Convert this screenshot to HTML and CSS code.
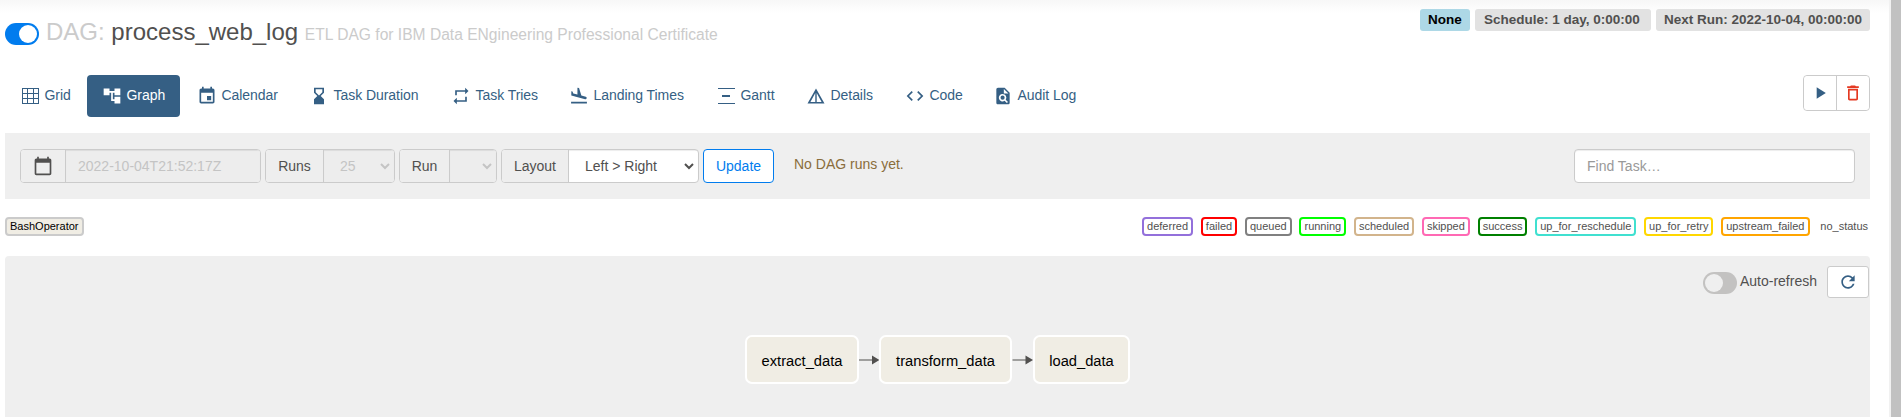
FILE: index.html
```html
<!DOCTYPE html>
<html lang="en">
<head>
<meta charset="utf-8">
<title>process_web_log - Graph</title>
<link rel="stylesheet" href="styles.css">
</head>
<body>
<main class="page">
  <header class="head">
    <h3 class="title"><span class="switch on"><i></i></span><span class="muted">DAG:</span> <span class="name">process_web_log</span> <small>ETL DAG for IBM Data ENgineering Professional Certificate</small></h3>
    <div class="badges">
      <span class="badge none">None</span>
      <span class="badge sched">Schedule: 1 day, 0:00:00</span>
      <span class="badge">Next Run: 2022-10-04, 00:00:00</span>
    </div>
  </header>

  <div class="navrow">
    <nav class="tabs">
      <a><svg viewBox="0 0 20 20"><path fill-rule="evenodd" d="M2 2h17v16H2zM3 3v4h4V3zm5 0v4h5V3zm6 0v4h4V3zM3 8v4h4V8zm5 0v4h5V8zm6 0v4h4V8zM3 13v4h4v-4zm5 0v4h5v-4zm6 0v4h4v-4z"/></svg>Grid</a>
      <a class="active"><svg viewBox="0 0 24 24"><path d="M22 11V3h-7v3H9V3H2v8h7V8h2v10h4v3h7v-8h-7v3h-2V8h2v3z"/></svg>Graph</a>
      <a><svg viewBox="0 0 24 24"><path d="M17 12h-5v5h5v-5zM16 1v2H8V1H6v2H5c-1.110 0-1.990.9-1.990 2L3 19c0 1.100.89 2 2 2h14c1.100 0 2-.9 2-2V5c0-1.100-.9-2-2-2h-1V1h-2zm3 18H5V8h14v11z"/></svg>Calendar</a>
      <a><svg viewBox="0 0 24 24"><path d="M6 2v6h.010L6 8.010 10 12l-4 4 .010.010H6V22h12v-5.990h-.010L18 16l-4-4 4-3.990-.010-.010H18V2H6zm10 5.500-4 4-4-4V4h8z"/></svg>Task Duration</a>
      <a><svg viewBox="0 0 24 24"><path d="M7 7h10v3l4-4-4-4v3H5v6h2V7zm10 10H7v-3l-4 4 4 4v-3h12v-6h-2v4z"/></svg>Task Tries</a>
      <a><svg viewBox="0 0 24 24"><path d="M2.500 19h19v2h-19zM19.340 15.850c.8.210 1.620-.26 1.840-1.060.21-.8-.26-1.620-1.060-1.840l-5.310-1.420-2.760-9.020L10.120 2v8.280L5.150 8.950l-.93-2.320-1.450-.39v5.170z"/></svg>Landing Times</a>
      <a><svg viewBox="0 0 20 20"><path d="M2 2h17v1H2zM6 9h8v2H6zM2 17h17v1H2z"/></svg>Gantt</a>
      <a><svg viewBox="0 0 20 20"><path fill-rule="evenodd" d="M10 2.500 18.500 17.500h-17zM9.300 7 4.400 16h4.900zm1.400 0v9h4.900z"/></svg>Details</a>
      <a><svg viewBox="0 0 24 24"><path d="M9.400 16.600 4.800 12l4.600-4.600L8 6l-6 6 6 6zm5.200 0 4.600-4.600-4.600-4.600L16 6l6 6-6 6z"/></svg>Code</a>
      <a><svg viewBox="0 0 24 24"><path fill-rule="evenodd" d="M14 2H6c-1.100 0-2 .9-2 2v16c0 1.100.9 2 2 2h12c1.100 0 2-.9 2-2V8zm-1 7V3.500L18.500 9zM11.500 9.500a4.500 4.500 0 1 0 2.400 8.300l2.700 2.700 1.400-1.400-2.700-2.700a4.500 4.500 0 0 0-3.800-6.900zm0 2a2.500 2.500 0 1 1 0 5 2.500 2.500 0 0 1 0-5z"/></svg>Audit Log</a>
    </nav>
    <div class="actions">
      <button class="act"><svg viewBox="0 0 24 24"><path d="M8 5v14l11-7z"/></svg></button>
      <button class="act danger"><svg viewBox="0 0 24 24"><path d="M6 19c0 1.100.9 2 2 2h8c1.100 0 2-.9 2-2V7H6v12zM8 9h8v10H8V9zm7.500-5-1-1h-5l-1 1H5v2h14V4z"/></svg></button>
    </div>
  </div>

  <section class="filters">
    <div class="group date"><span class="addon"><svg viewBox="0 0 24 24"><path d="M20 3h-1V1h-2v2H7V1H5v2H4c-1.100 0-2 .9-2 2v16c0 1.100.9 2 2 2h16c1.100 0 2-.9 2-2V5c0-1.100-.9-2-2-2zm0 18H4V8h16v13z"/></svg></span><span class="field off">2022-10-04T21:52:17Z</span></div>
    <div class="group runs"><span class="addon">Runs</span><span class="field off">25<svg class="chev" viewBox="0 0 10 7"><path d="M1 1l4 4 4-4"/></svg></span></div>
    <div class="group run"><span class="addon">Run</span><span class="field off"><svg class="chev" viewBox="0 0 10 7"><path d="M1 1l4 4 4-4"/></svg></span></div>
    <div class="group layout"><span class="addon">Layout</span><span class="field">Left &gt; Right<svg class="chev" viewBox="0 0 10 7"><path d="M1 1l4 4 4-4"/></svg></span></div>
    <button class="update">Update</button>
    <span class="notice">No DAG runs yet.</span>
    <input class="find" type="text" placeholder="Find Task…">
  </section>

  <section class="legend">
    <span class="tag operator">BashOperator</span>
    <div class="states">
      <span class="tag deferred">deferred</span>
      <span class="tag failed">failed</span>
      <span class="tag queued">queued</span>
      <span class="tag running">running</span>
      <span class="tag scheduled">scheduled</span>
      <span class="tag skipped">skipped</span>
      <span class="tag success">success</span>
      <span class="tag reschedule">up_for_reschedule</span>
      <span class="tag retry">up_for_retry</span>
      <span class="tag upstream">upstream_failed</span>
      <span class="tag nostatus">no_status</span>
    </div>
  </section>

  <section class="graph">
    <div class="refresh">
      <span class="switch"><i></i></span><span class="auto">Auto-refresh</span>
      <button class="reload"><svg viewBox="0 0 24 24"><path d="M17.650 6.350C16.200 4.900 14.210 4 12 4c-4.420 0-7.990 3.580-7.990 8s3.570 8 7.990 8c3.730 0 6.840-2.550 7.730-6h-2.080c-.82 2.330-3.040 4-5.650 4-3.310 0-6-2.690-6-6s2.690-6 6-6c1.660 0 3.140.69 4.220 1.780L13 11h7V4z"/></svg></button>
    </div>
    <div class="flow">
      <span class="node extract">extract_data</span>
      <svg class="edge" viewBox="0 0 20 10"><path d="M0 4.400h14v1.200H0zM13 .5 20.500 5 13 9.500z"/></svg>
      <span class="node transform">transform_data</span>
      <svg class="edge second" viewBox="0 0 20 10"><path d="M0 4.400h14v1.200H0zM13 .5 20.500 5 13 9.500z"/></svg>
      <span class="node load">load_data</span>
    </div>
  </section>
</main>
<div class="scrollbar"></div>
</body>
</html>
```

FILE: styles.css
```css
* { box-sizing: border-box; }
body {
  margin: 0;
  height: 417px;
  overflow: hidden;
  display: flex;
  justify-content: space-between;
  background: linear-gradient(#f7f7f7, #fefefe 11px, #fff 13px);
  color: #51504f;
  font: 14px/20px "Liberation Sans", Arial, sans-serif;
}
svg { fill: currentColor; flex: none; }
button { font: inherit; padding: 0; background: #fff; cursor: pointer; }
.page { width: 1865px; margin-left: 5px; }
.scrollbar { width: 12px; background: #c1c1c1; border-left: 2px solid #f1f1f1; }

.head { height: 75px; display: flex; justify-content: space-between; }
.title { margin: 19px 0 0; font-size: 24px; line-height: 26px; font-weight: 400; height: 26px; white-space: nowrap; }
.title .switch { vertical-align: top; margin: 4px 7px 0 0; }
.title .muted, .title small { color: #cbcbcb; }
.title small { font-size: 15.6px; }
.switch { display: inline-block; width: 34px; height: 22px; border-radius: 11px; background: #c3c2c1; padding: 2px; }
.switch i { display: block; width: 18px; height: 18px; border-radius: 50%; background: #efefef; }
.switch.on { background: #017cee; }
.switch.on i { margin-left: 12px; background: #fff; }
.badges { display: flex; gap: 5px; padding-top: 9px; }
.badge { height: 22px; padding: 0 8px; border-radius: 3px; background: #e2e2e2; font: bold 13.5px/21px "Liberation Sans", Arial, sans-serif; white-space: pre; }
.badge.none { background: #add8e6; color: #000; width: 50px; }
.badge.sched { width: 176px; padding-left: 9px; }

.navrow { height: 58px; display: flex; justify-content: space-between; align-items: flex-start; }
.tabs { display: grid; grid-template-columns: 80px 93px 110px 140px 116px 145px 88px 97px 86px auto; gap: 2px; }
.tabs a { display: flex; align-items: center; gap: 4.500px; height: 42px; padding: 0 0 2px 15px; border-radius: 4px; color: #355f84; white-space: nowrap; letter-spacing: -.05px; }
.tabs svg { width: 20px; height: 20px; margin-top: 2px; }
.tabs .active { background: #355f84; color: #fff; }
.actions { display: flex; height: 36px; width: 67px; border: 1px solid #cbcbcb; border-radius: 4px; background: #fff; }
.act { flex: 1; border: 0; border-radius: 4px; color: #355f84; display: flex; align-items: center; justify-content: center; }
.act svg { width: 20px; height: 20px; }
.act.danger { color: #e43921; border-left: 1px solid #cbcbcb; border-radius: 0 4px 4px 0; }

.filters { height: 66px; display: flex; align-items: center; padding: 0 15px; background: #efefef; gap: 4px; }
.group { display: flex; height: 34px; border: 1px solid #cbcbcb; border-radius: 4px; background: #fff; overflow: hidden; }
.addon { display: flex; align-items: center; justify-content: center; background: #eee; border-right: 1px solid #cbcbcb; }
.addon svg { width: 20px; height: 20px; }
.field { flex: 1; display: flex; align-items: center; padding: 0 4px 0 12px; box-shadow: inset 0 1px 1px rgba(0, 0, 0, .075); }
.field.off { background: #ededed; color: #c4c4c4; }
.chev { width: 10px; height: 7px; margin-left: auto; fill: none; stroke: currentColor; stroke-width: 2; }
.date { width: 241px; }
.date .addon { width: 45px; }
.runs { width: 130px; }
.runs .addon { width: 58px; }
.runs .field { padding-left: 16px; }
.run { width: 98px; }
.run .addon { width: 50px; }
.layout { width: 198px; }
.layout .addon { width: 67px; }
.layout .field { padding-left: 16px; }
.update { width: 71px; height: 34px; border: 1px solid #017cee; border-radius: 4px; color: #017cee; }
.notice { margin: 0 0 4px 16px; color: #8a6d3b; }
.find { width: 281px; height: 34px; margin-left: auto; padding: 0 12px; border: 1px solid #cbcbcb; border-radius: 4px; font: inherit; box-shadow: inset 0 1px 1px rgba(0, 0, 0, .075); }
.find::placeholder { color: #999; }

.legend { height: 57px; display: flex; justify-content: space-between; padding-top: 18px; }
.states { display: flex; gap: 7.800px; }
.tag { height: 19px; padding: 0 3px; border: 2px solid transparent; border-radius: 4px; background: #fff; font-size: 11px; line-height: 15px; }
.operator { width: 79px; background: #f0ede4; border-color: #cbcbcb; color: #000; }
.deferred { border-color: mediumpurple; }
.failed { border-color: red; }
.queued { border-color: gray; }
.running { border-color: lime; }
.scheduled { border-color: tan; }
.skipped { border-color: hotpink; }
.success { border-color: green; }
.reschedule { border-color: turquoise; }
.retry { border-color: gold; }
.upstream { border-color: orange; }
.nostatus { background: none; padding: 0 0 0 1px; }

.graph { height: 161px; background: #efefef; border-radius: 4px 4px 0 0; }
.refresh { height: 79px; display: flex; justify-content: flex-end; align-items: flex-start; padding: 10px 1px 0 0; }
.refresh .switch { margin: 6px 3px 0 0; }
.auto { margin: 5px 10px 0 0; }
.reload { width: 42px; height: 32px; border: 1px solid #cbcbcb; border-radius: 3px; color: #355f84; display: flex; align-items: center; justify-content: center; }
.reload svg { width: 20px; height: 20px; }
.flow { display: flex; align-items: center; padding-left: 740px; }
.node { height: 49px; border: 2px solid #fff; border-radius: 7px; background: #f0ede4; color: #000; font-size: 14.700px; line-height: 49px; text-align: center; }
.extract { width: 114px; }
.transform { width: 133px; }
.load { width: 97px; }
.edge { width: 20px; height: 10px; }
.edge.second { width: 21px; }
```
